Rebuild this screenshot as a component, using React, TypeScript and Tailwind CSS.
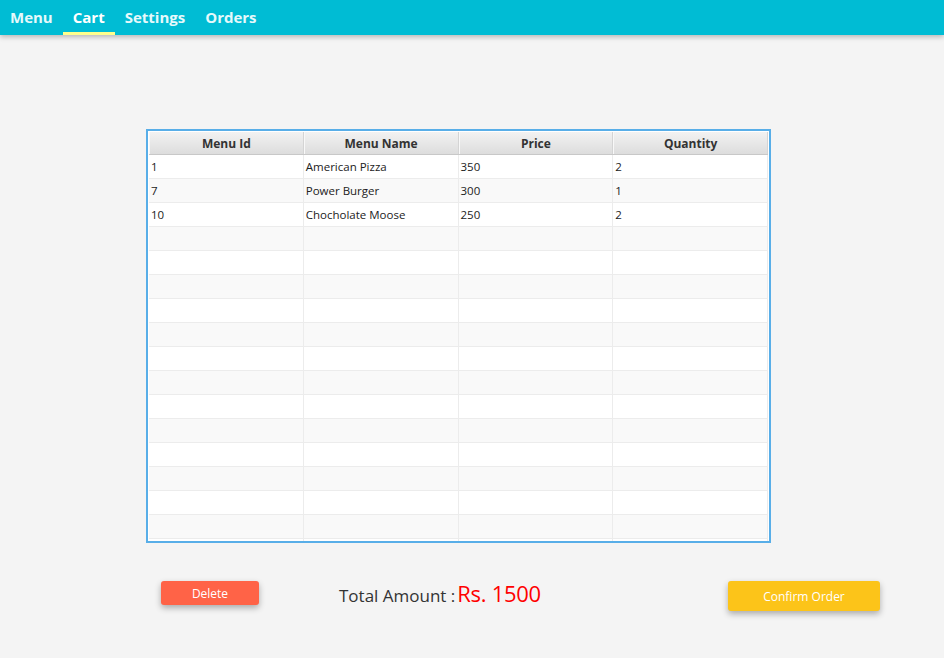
import React from "react";

const rows = [
  { id: "1", name: "American Pizza", price: "350", qty: "2" },
  { id: "7", name: "Power Burger", price: "300", qty: "1" },
  { id: "10", name: "Chocholate Moose", price: "250", qty: "2" },
];

const tabs = ["Menu", "Cart", "Settings", "Orders"];

export default function App() {
  const body = [...rows];
  while (body.length < 17) body.push({ id: "", name: "", price: "", qty: "" });

  return (
    <div className="min-h-screen h-[658px] bg-[#f4f4f4] font-['Open_Sans','Noto_Sans',sans-serif] overflow-hidden">
      {/* Top tab bar */}
      <div className="relative z-10 h-[35px] bg-[#00bcd4] shadow-[0_2px_5px_rgba(0,0,0,0.25)] flex">
        {tabs.map((t) => (
          <div
            key={t}
            className={
              t === "Cart"
                ? "h-full px-[10px] flex items-center text-[15px] font-bold text-white border-b-[3px] border-[#ffff8d] pt-[2px]"
                : "h-full px-[10px] flex items-center text-[15px] font-bold text-[#e6f9fb] pb-px"
            }
          >
            {t}
          </div>
        ))}
      </div>

      {/* Cart table */}
      <div className="pt-[94px] pl-[146px]">
        <div className="w-[625px] h-[414px] border-2 border-[#58aee8] p-px bg-white overflow-hidden">
          <div className="grid grid-cols-4 h-[23px] bg-gradient-to-b from-[#f2f2f2] to-[#dddddd] border-b border-[#c8c8c8]">
            {["Menu Id", "Menu Name", "Price", "Quantity"].map((h) => (
              <div
                key={h}
                className="flex items-center justify-center pt-px text-[12px] font-bold text-[#333] border-r border-[#d4d4d4] border-l border-l-[#f8f8f8]"
              >
                {h}
              </div>
            ))}
          </div>
          {body.map((r, i) => (
            <div
              key={i}
              className={
                i % 2 === 0
                  ? "grid grid-cols-4 h-[24px] bg-white border-b border-[#ececec]"
                  : "grid grid-cols-4 h-[24px] bg-[#f9f9f9] border-b border-[#ececec]"
              }
            >
              {[r.id, r.name, r.price, r.qty].map((c, j) => (
                <div
                  key={j}
                  className="flex items-center pl-[2px] text-[11.5px] text-[#222] border-r border-[#ececec]"
                >
                  {c}
                </div>
              ))}
            </div>
          ))}
        </div>
      </div>

      {/* Bottom controls */}
      <div className="flex items-start mt-[38px]">
        <button className="ml-[161px] w-[98px] h-[24px] pt-px rounded-[3px] bg-[#ff6347] text-white text-[12px] shadow-[0_3px_6px_rgba(0,0,0,0.3)]">
          Delete
        </button>
        <div className="ml-[80px] mt-[-4px] flex items-baseline">
          <span className="text-[17px] text-[#333]">Total Amount :</span>
          <span className="ml-[2px] text-[22px] tracking-[-0.3px] text-[#ff0000]">Rs. 1500</span>
        </div>
        <button className="ml-auto mr-[64px] w-[152px] h-[30px] pt-px rounded-[3px] bg-[#fcc419] text-white text-[12px] shadow-[0_3px_6px_rgba(0,0,0,0.3)]">
          Confirm Order
        </button>
      </div>
    </div>
  );
}
